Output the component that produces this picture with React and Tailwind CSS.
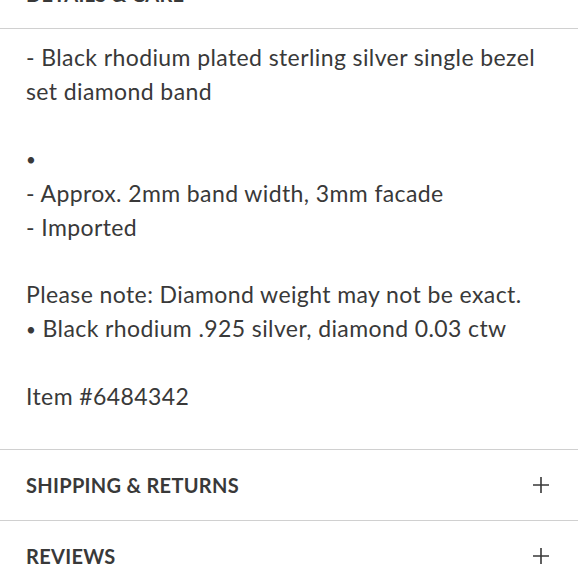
import React from 'react';

const PlusIcon = () => (
  <svg width="16" height="16" viewBox="0 0 16 16" className="shrink-0">
    <path d="M8 0v16M0 8h16" stroke="#393939" strokeWidth="1.6" fill="none" />
  </svg>
);

const Section = ({ title, children, open = false }) => (
  <div className="border-b-[1.5px] border-[#d0d0d0]">
    <button
      type="button"
      className={`w-full h-[70px] flex items-center justify-between pl-[26px] pr-[29px] text-left ${open ? 'border-b-[1.5px] border-[#d0d0d0]' : ''}`}
    >
      <span className="text-[20px] font-bold tracking-[0.3px] text-[#393939] uppercase">{title}</span>
      {!open && <PlusIcon />}
    </button>
    {open && children}
  </div>
);

const Dot = () => <span className="text-[17px] align-[1px]">•</span>;

export default function App() {
  return (
    <div className="w-[578px] h-[580px] overflow-hidden bg-white font-['Lato',sans-serif] text-[#393939]">
      <div className="-mt-[41px]">
        <Section title="Details & Care" open>
          <div className="pl-[26px] pr-[26px] pt-[12px] pb-[35px] text-[23px] tracking-[0.4px] leading-[33.7px]">
            <p>- Black rhodium plated sterling silver single bezel set diamond band</p>
            <p>&nbsp;</p>
            <p><Dot /></p>
            <p>- Approx. 2mm band width, 3mm facade</p>
            <p>- Imported</p>
            <p>&nbsp;</p>
            <p>Please note: Diamond weight may not be exact.</p>
            <p><Dot /> Black rhodium .925 silver, diamond 0.03 ctw</p>
            <p>&nbsp;</p>
            <p>Item #6484342</p>
          </div>
        </Section>
        <Section title="Shipping & Returns" />
        <Section title="Reviews" />
      </div>
    </div>
  );
}
